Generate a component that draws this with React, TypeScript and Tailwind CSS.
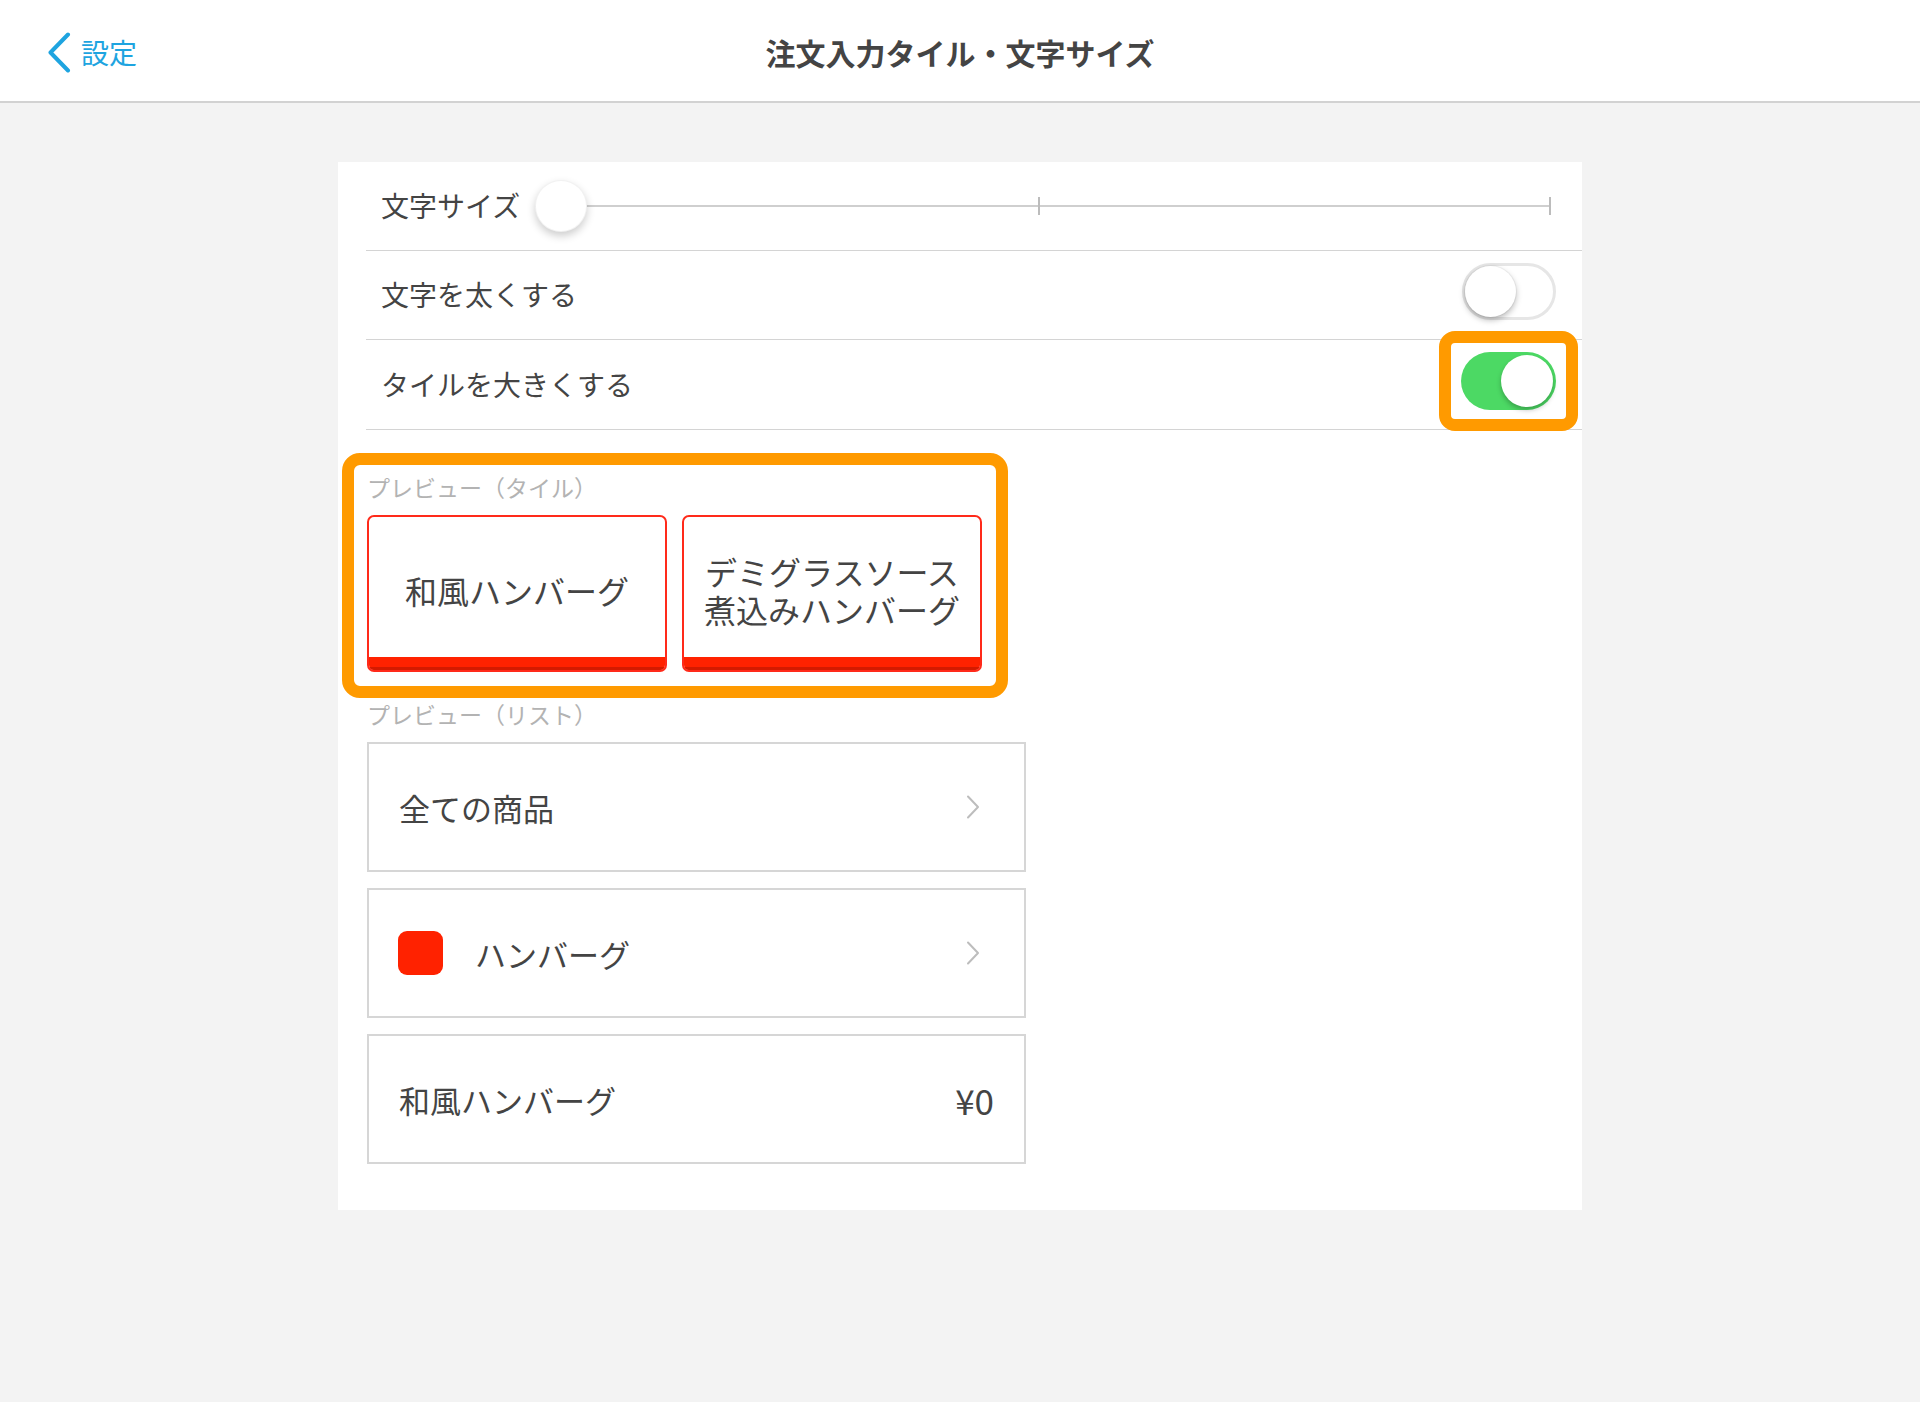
import React from 'react';

const FONT = "font-['Noto_Sans_CJK_JP','Noto_Sans',sans-serif]";

function Toggle({ on }: { on: boolean }) {
  return on ? (
    <div className="relative h-[58px] w-[95px] rounded-full bg-[#4cd964]">
      <div className="absolute right-[3px] top-[3px] h-[52px] w-[52px] rounded-full bg-white shadow-[0_3px_5px_rgba(0,0,0,0.25)]" />
    </div>
  ) : (
    <div className="relative h-[57px] w-[94px] rounded-full border-[3px] border-[#e6e6e6] bg-white">
      <div className="absolute left-[0px] top-[0px] h-[51px] w-[51px] rounded-full bg-white shadow-[0_3px_6px_rgba(0,0,0,0.28),0_0_0_1px_rgba(0,0,0,0.04)]" />
    </div>
  );
}

function Chevron() {
  return (
    <svg width="14" height="24" viewBox="0 0 14 24" fill="none" className="shrink-0">
      <path d="M2 1.5 L12 12 L2 22.5" stroke="#bdbdbd" strokeWidth="2" strokeLinecap="round" strokeLinejoin="round" />
    </svg>
  );
}

function Tile({ children }: { children: React.ReactNode }) {
  return (
    <div className="flex h-[157px] w-[300px] flex-col overflow-hidden rounded-[7px] border-2 border-[#ff2a1a] bg-white">
      <div className="flex flex-1 items-center justify-center pt-[5px] text-center text-[32px] leading-[38px] text-[#444]">
        {children}
      </div>
      <div className="h-[13px] border-b-[3px] border-[#d41a00] bg-[#ff2200]" />
    </div>
  );
}

export default function App() {
  return (
    <div className={`min-h-[1402px] w-full bg-[#f3f3f3] ${FONT}`}>
      {/* Navigation bar */}
      <header className="grid h-[103px] grid-cols-[1fr_auto_1fr] items-center border-b-2 border-[#d2d2d2] bg-white pt-[3px]">
        <div className="flex items-center gap-[10px] pl-[47px]">
          <svg width="24" height="41" viewBox="0 0 24 41" fill="none">
            <path d="M21 2.5 L3.5 20.5 L21 38.5" stroke="#1ea4e0" strokeWidth="4" strokeLinecap="round" strokeLinejoin="round" />
          </svg>
          <span className="text-[28px] leading-none text-[#1ea4e0]">設定</span>
        </div>
        <h1 className="text-[30px] font-bold leading-none text-[#444]">注文入力タイル・文字サイズ</h1>
        <div />
      </header>

      <main className="pt-[59px] pl-[338px]">
        <div className="w-[1244px] bg-white pb-[46px]">
          {/* Settings rows */}
          <div className="ml-[28px]">
            <div className="flex h-[89px] items-center border-b border-[#d4d4d4] pl-[15px] pr-[31px]">
              <span className="-mt-[3px] text-[28px] leading-none text-[#444]">文字サイズ</span>
              <div className="relative ml-[15px] flex h-[52px] flex-1 items-center">
                <div className="h-[2px] flex-1 bg-[#cfcfcf]" />
                <div className="absolute left-[503px] top-[17px] h-[18px] w-[2px] bg-[#bcbcbc]" />
                <div className="absolute right-0 top-[17px] h-[18px] w-[2px] bg-[#bcbcbc]" />
                <div className="absolute left-0 top-0 h-[52px] w-[52px] rounded-full border border-[rgba(0,0,0,0.05)] bg-white shadow-[0_4px_8px_rgba(0,0,0,0.2)]" />
              </div>
            </div>
            <div className="flex h-[89px] items-center justify-between border-b border-[#d4d4d4] pl-[15px] pr-[26px]">
              <span className="-mt-[2px] text-[28px] leading-none text-[#444]">文字を太くする</span>
              <div className="-mt-[8px]">
                <Toggle on={false} />
              </div>
            </div>
            <div className="flex h-[90px] items-center justify-between border-b border-[#d4d4d4] pl-[15px] pr-[26px]">
              <span className="-mt-[2px] text-[28px] leading-none text-[#444]">タイルを大きくする</span>
              <div className="relative -mt-[8px]">
                <Toggle on={true} />
                <div className="pointer-events-none absolute -inset-x-[22px] -inset-y-[21px] rounded-[16px] border-[12px] border-[#ff9a00]" />
              </div>
            </div>
          </div>

          {/* Previews */}
          <div className="px-[29px] pt-[43px]">
            <div className="relative w-[615px]">
              <p className="text-[23px] leading-[28px] text-[#b3b3b3]">プレビュー（タイル）</p>
              <div className="mt-[14px] flex gap-[15px]">
                <Tile>和風ハンバーグ</Tile>
                <Tile>
                  デミグラスソース
                  <br />
                  煮込みハンバーグ
                </Tile>
              </div>
              <div className="pointer-events-none absolute -bottom-[26px] -left-[25px] -right-[26px] -top-[20px] rounded-[18px] border-[12px] border-[#ff9a00]" />
            </div>

            <p className="mt-[28px] text-[23px] leading-[28px] text-[#b3b3b3]">プレビュー（リスト）</p>
            <div className="mt-[14px] flex w-[659px] flex-col gap-[16px]">
              <div className="flex h-[130px] items-center justify-between border-2 border-[#d6d6d6] pl-[30px] pr-[44px]">
                <span className="text-[31px] leading-none text-[#444]">全ての商品</span>
                <Chevron />
              </div>
              <div className="flex h-[130px] items-center border-2 border-[#d6d6d6] pl-[29px] pr-[44px]">
                <div className="h-[44px] w-[45px] rounded-[9px] bg-[#ff2200]" />
                <span className="ml-[32px] flex-1 text-[31px] leading-none text-[#444]">ハンバーグ</span>
                <Chevron />
              </div>
              <div className="flex h-[130px] items-center justify-between border-2 border-[#d6d6d6] pl-[30px] pr-[30px]">
                <span className="text-[31px] leading-none text-[#444]">和風ハンバーグ</span>
                <span className="text-[35px] leading-none text-[#444]">¥0</span>
              </div>
            </div>
          </div>
        </div>
      </main>
    </div>
  );
}
